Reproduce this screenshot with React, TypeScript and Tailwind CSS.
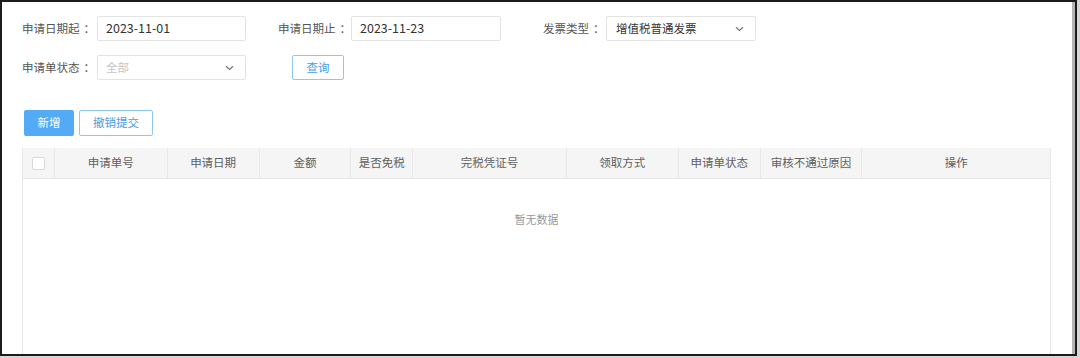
import React from "react";

const Chevron = () => (
  <svg width="9" height="6" viewBox="0 0 9 6" className="shrink-0">
    <path d="M1 1.2 L4.5 4.5 L8 1.2" fill="none" stroke="#777" strokeWidth="1.2" />
  </svg>
);

const Label = ({ text, w, ml = 0 }: { text: string; w: number; ml?: number }) => (
  <span
    className="text-[11.5px] text-[#555] flex items-center whitespace-nowrap"
    style={{ width: w, marginLeft: ml }}
  >
    {text}
    <span className="ml-[4px]">：</span>
  </span>
);

const cols: { label: string; w: number }[] = [
  { label: "申请单号", w: 113 },
  { label: "申请日期", w: 92 },
  { label: "金额", w: 92 },
  { label: "是否免税", w: 62 },
  { label: "完税凭证号", w: 154 },
  { label: "领取方式", w: 112 },
  { label: "申请单状态", w: 82 },
  { label: "审核不通过原因", w: 102 },
  { label: "操作", w: 188 },
];

export default function App() {
  return (
    <div
      className="w-[1080px] h-[358px] bg-[#d6d6d6] overflow-hidden"
      style={{ fontFamily: '"Noto Sans CJK SC", "Noto Sans", sans-serif' }}
    >
      <div className="w-[1077px] h-[356px] border-2 border-[#1c1c1c] flex overflow-hidden">
        <div className="flex-1 bg-white pl-[20px] pt-[14px] flex flex-col">
          {/* Row 1 */}
          <div className="flex items-center h-[25px]">
            <Label text="申请日期起" w={75} />
            <div className="w-[149px] h-[25px] border border-[#e3e3e3] rounded-[2px] flex items-center px-[8px] text-[12.5px] text-[#333]">
              2023-11-01
            </div>
            <Label text="申请日期止" w={73} ml={32} />
            <div className="w-[150px] h-[25px] border border-[#e3e3e3] rounded-[2px] flex items-center px-[8px] text-[12.5px] text-[#333]">
              2023-11-23
            </div>
            <Label text="发票类型" w={63} ml={42} />
            <div className="w-[150px] h-[25px] border border-[#e3e3e3] rounded-[2px] flex items-center justify-between pl-[9px] pr-[11px] text-[11.5px] text-[#333]">
              <span>增值税普通发票</span>
              <Chevron />
            </div>
          </div>
          {/* Row 2 */}
          <div className="flex items-center h-[25px] mt-[14px]">
            <Label text="申请单状态" w={75} />
            <div className="w-[149px] h-[25px] border border-[#e3e3e3] rounded-[2px] flex items-center justify-between pl-[8px] pr-[11px] text-[11.5px] text-[#c4c4c4]">
              <span>全部</span>
              <Chevron />
            </div>
            <button className="ml-[46px] w-[52px] h-[25px] border border-[#8fc6f6] rounded-[2px] text-[11.5px] text-[#4a9be6] bg-white">
              查询
            </button>
          </div>
          {/* Row 3 */}
          <div className="flex items-center mt-[30px] ml-[2px] gap-[5px]">
            <button className="w-[50px] h-[26px] rounded-[2px] bg-[#55aaf5] text-white text-[11.5px]">
              新增
            </button>
            <button className="w-[74px] h-[26px] rounded-[2px] border border-[#8fc6f6] bg-white text-[#4a9be6] text-[11.5px]">
              撤销提交
            </button>
          </div>
          {/* Table */}
          <div className="mt-[12px] w-[1029px] flex-1 flex flex-col border-l border-r border-[#e8e8e8]">
            <div className="flex h-[31px] bg-[#f5f5f5] border-b border-[#e8e8e8]">
              <div className="w-[32px] h-full flex items-center justify-center border-r border-[#e8e8e8]">
                <div className="w-[13px] h-[13px] bg-white border border-[#d9d9d9] rounded-[2px]" />
              </div>
              {cols.map((c, i) => (
                <div
                  key={c.label}
                  className={
                    "h-full flex items-center justify-center text-[11.5px] text-[#606060] " +
                    (i < cols.length - 1 ? "border-r border-[#e8e8e8]" : "")
                  }
                  style={{ width: c.w }}
                >
                  {c.label}
                </div>
              ))}
            </div>
            <div className="flex-1 flex justify-center pt-[32px]">
              <span className="text-[11px] text-[#999] leading-[16px]">暂无数据</span>
            </div>
          </div>
        </div>
        <div className="w-[3px] bg-[#b5b5b5]" />
      </div>
    </div>
  );
}
